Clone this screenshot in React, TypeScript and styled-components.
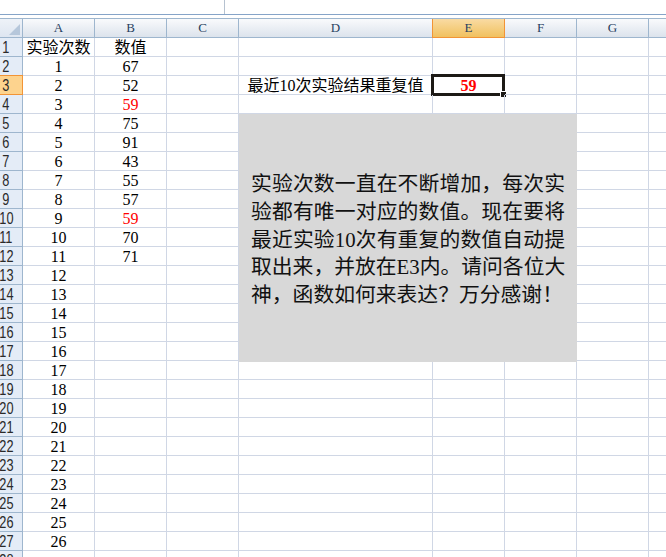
import styled, { createGlobalStyle, css } from "styled-components";

const GlobalStyle = createGlobalStyle`
  html, body {
    margin: 0;
    padding: 0;
    background: #ffffff;
    overflow: hidden;
  }
`

const CELL_FONT = `"Liberation Serif", "Noto Sans CJK SC", serif`
const GRID = "#d0d7e5"
const HEAD_LINE = "#9eb6ce"
const ORANGE = "#f29436"

const COLS = [72, 72, 72, 194, 72, 72, 72, 72]
// H is off the right edge, so its letter is not shown
const LETTERS = ["A", "B", "C", "D", "E", "F", "G", ""]
const ROWS = 28

const Page = styled.div`
  width: 666px;
  height: 557px;
  overflow: hidden;
  background: #ffffff;
`

const FormulaBar = styled.div`
  display: flex;
  height: 14px;
  border-bottom: 1px solid #86a4c8;
  margin-bottom: 3px;
`

const NameBox = styled.div`
  width: 224px;
  border-right: 1px solid #b6c2d0;
`

const SheetWrap = styled.div`
  position: relative;
  border-top: 1px solid ${HEAD_LINE};
`

const Sheet = styled.div`
  display: grid;
  grid-template-columns: 23px ${COLS.map(c => `${c}px`).join(" ")};
  grid-auto-rows: 19px;
`

const Corner = styled.div`
  position: relative;
  box-sizing: border-box;
  background: linear-gradient(#eef2f8, #dee6f1);
  border-right: 1px solid ${HEAD_LINE};
  border-bottom: 1px solid ${HEAD_LINE};
`

const CornerMark = styled.svg`
  position: absolute;
  right: 2px;
  bottom: 2px;
`

const ColHeader = styled.div<{ $active?: boolean }>`
  box-sizing: border-box;
  display: flex;
  align-items: center;
  justify-content: center;
  font-family: "Liberation Serif", serif;
  font-size: 13px;
  color: #27415f;
  background: linear-gradient(#f9fafc, #dce3ec);
  border-right: 1px solid ${HEAD_LINE};
  border-bottom: 1px solid ${HEAD_LINE};
  ${p => p.$active && css`
    background: linear-gradient(#f9dba3, #f1c15f);
    border-right-color: ${ORANGE};
    border-bottom-color: ${ORANGE};
    box-shadow: -1px 0 0 ${ORANGE};
  `}
`

const RowHeader = styled.div<{ $active?: boolean }>`
  box-sizing: border-box;
  display: flex;
  align-items: center;
  justify-content: center;
  padding-right: 10px;
  overflow: hidden;
  font-family: "Liberation Sans", sans-serif;
  font-size: 17px;
  color: #2a2a2a;
  background: #e4ecf7;
  border-right: 1px solid ${HEAD_LINE};
  border-bottom: 1px solid ${HEAD_LINE};
  ${p => p.$active && css`
    background: #fdd38e;
    border-right-color: ${ORANGE};
    border-bottom-color: ${ORANGE};
    box-shadow: 0 -1px 0 ${ORANGE};
  `}
`

const RowNumber = styled.span`
  flex: none;
  display: inline-block;
  transform: scaleX(0.75);
  line-height: 1;
  padding-top: 1px;
`

const Cell = styled.div<{ $red?: boolean; $bold?: boolean }>`
  position: relative;
  box-sizing: border-box;
  display: flex;
  align-items: center;
  justify-content: center;
  padding-top: 1px;
  white-space: nowrap;
  font-family: ${CELL_FONT};
  font-size: 16px;
  line-height: 1;
  color: ${p => (p.$red ? "#ff0000" : "#000000")};
  font-weight: ${p => (p.$bold ? 700 : 400)};
  border-right: 1px solid ${GRID};
  border-bottom: 1px solid ${GRID};
`

const Selection = styled.div`
  position: absolute;
  left: -2px;
  top: -2px;
  width: 74px;
  height: 22px;
  box-sizing: border-box;
  border: 3px solid #1d1a16;
  pointer-events: none;
`

const FillHandle = styled.div`
  position: absolute;
  right: -5px;
  bottom: -5px;
  width: 5px;
  height: 5px;
  background: #1d1a16;
  border: 1px solid #ffffff;
`

const NoteBox = styled.div`
  position: absolute;
  left: 239px;
  top: 95px;
  width: 338px;
  height: 248px;
  box-sizing: border-box;
  padding: 3px 0 0 12px;
  background: #d8d8d8;
  display: flex;
  flex-direction: column;
  justify-content: center;
`

const NoteLine = styled.div<{ $justify?: boolean }>`
  width: 314px;
  font-family: ${CELL_FONT};
  font-size: 20.8px;
  line-height: 27.75px;
  color: #111111;
  white-space: nowrap;
  text-align: ${p => (p.$justify ? "justify" : "left")};
  text-align-last: ${p => (p.$justify ? "justify" : "left")};
`

const colA = (r: number) => (r === 1 ? "实验次数" : r <= 27 ? String(r - 1) : "")
const valuesB = ["67", "52", "59", "75", "91", "43", "55", "57", "59", "70", "71"]
const colB = (r: number) => (r === 1 ? "数值" : valuesB[r - 2] ?? "")

const NOTE = [
  "实验次数一直在不断增加，每次实",
  "验都有唯一对应的数值。现在要将",
  "最近实验10次有重复的数值自动提",
  "取出来，并放在E3内。请问各位大",
  "神，函数如何来表达？万分感谢！",
]

const App = () => {
  const rows = Array.from({ length: ROWS }, (_, i) => i + 1)

  return (
    <Page>
      <GlobalStyle />
      <FormulaBar>
        <NameBox />
      </FormulaBar>
      <SheetWrap>
        <Sheet>
          <Corner>
            <CornerMark width="11" height="11" viewBox="0 0 11 11">
              <polygon points="11,0 11,11 0,11" fill="#b6c7db" />
            </CornerMark>
          </Corner>
          {LETTERS.map((l, i) => (
            <ColHeader key={i} $active={l === "E"}>{l}</ColHeader>
          ))}
          {rows.map(r => (
            <>
              <RowHeader key={`h${r}`} $active={r === 3}>
                <RowNumber>{r}</RowNumber>
              </RowHeader>
              <Cell key={`a${r}`}>{colA(r)}</Cell>
              <Cell key={`b${r}`} $red={r === 4 || r === 10}>{colB(r)}</Cell>
              <Cell key={`c${r}`} />
              <Cell key={`d${r}`}>{r === 3 ? "最近10次实验结果重复值" : ""}</Cell>
              {r === 3 ? (
                <Cell key={`e${r}`} $red $bold>
                  59
                  <Selection>
                    <FillHandle />
                  </Selection>
                </Cell>
              ) : (
                <Cell key={`e${r}`} />
              )}
              <Cell key={`f${r}`} />
              <Cell key={`g${r}`} />
              <Cell key={`i${r}`} />
            </>
          ))}
        </Sheet>
        <NoteBox>
          {NOTE.map((line, i) => (
            <NoteLine key={i} $justify={i < NOTE.length - 1}>{line}</NoteLine>
          ))}
        </NoteBox>
      </SheetWrap>
    </Page>
  );
}

export default App;
